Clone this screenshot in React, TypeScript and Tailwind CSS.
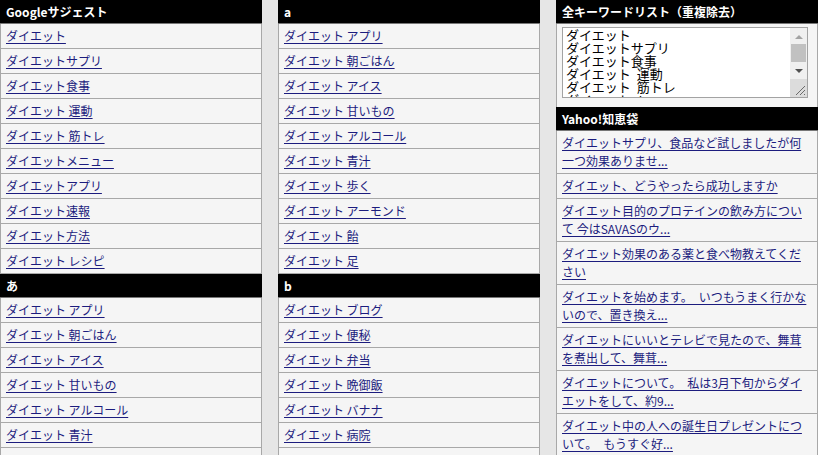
import React from 'react';

type Section = {
    title: string,
    items: string[]
}

// the last row of each lower section is cut off by the window bottom, so it is empty here
const col1: Section[] = [
    {
        title: 'Googleサジェスト',
        items: ['ダイエット', 'ダイエットサプリ', 'ダイエット食事', 'ダイエット 運動', 'ダイエット 筋トレ', 'ダイエットメニュー', 'ダイエットアプリ', 'ダイエット速報', 'ダイエット方法', 'ダイエット レシピ']
    },
    {
        title: 'あ',
        items: ['ダイエット アプリ', 'ダイエット 朝ごはん', 'ダイエット アイス', 'ダイエット 甘いもの', 'ダイエット アルコール', 'ダイエット 青汁', '']
    }
];

const col2: Section[] = [
    {
        title: 'a',
        items: ['ダイエット アプリ', 'ダイエット 朝ごはん', 'ダイエット アイス', 'ダイエット 甘いもの', 'ダイエット アルコール', 'ダイエット 青汁', 'ダイエット 歩く', 'ダイエット アーモンド', 'ダイエット 飴', 'ダイエット 足']
    },
    {
        title: 'b',
        items: ['ダイエット ブログ', 'ダイエット 便秘', 'ダイエット 弁当', 'ダイエット 晩御飯', 'ダイエット バナナ', 'ダイエット 病院', '']
    }
];

const chiebukuro = [
    'ダイエットサプリ、食品など試しましたが何一つ効果ありませ...',
    'ダイエット、どうやったら成功しますか',
    'ダイエット目的のプロテインの飲み方について 今はSAVASのウ...',
    'ダイエット効果のある薬と食べ物教えてください',
    'ダイエットを始めます。\u3000いつもうまく行かないので、置き換え...',
    'ダイエットにいいとテレビで見たので、舞茸を煮出して、舞茸...',
    'ダイエットについて。\u3000私は3月下旬からダイエットをして、約9...',
    'ダイエット中の人への誕生日プレゼントについて。\u3000もうすぐ好...'
];

const keywords = ['ダイエット', 'ダイエットサプリ', 'ダイエット食事', 'ダイエット  運動', 'ダイエット  筋トレ', 'ダイエットメニュー', 'ダイエットアプリ'];

function Header({ title }: { title: string }) {
    return (
        <div className="h-[24px] bg-black text-white font-bold text-[12px] leading-[24px] px-[6px] border-b border-[#777]">
            {title}
        </div>
    );
}

function Row({ text }: { text: string }) {
    return (
        <div className="h-[25px] bg-[#f5f5f5] border-b border-x border-[#a8a8a8] px-[5px] text-[12px] leading-[24px]">
            {text && <a href="#" className="text-[#1c1c7e] underline underline-offset-2">{text}</a>}
        </div>
    );
}

function KeywordBox() {
    return (
        <div className="h-[83px] bg-[#f5f5f5] border-x border-[#a8a8a8] px-[5px] pt-[3px]">
            <div className="relative w-[246px] h-[71px] bg-white border border-[#a3a3a3] overflow-hidden flex">
                <div className="flex-1 px-[3px] pt-0 text-[13px] leading-[13px] text-black">
                    {keywords.map((k, i) => <div key={i} className="whitespace-pre">{k}</div>)}
                </div>
                <div className="w-[17px] h-full bg-[#f0f0f0] flex flex-col items-center">
                    <div className="h-[16px] w-full flex items-center justify-center">
                        <svg width={8} height={5} viewBox="0 0 8 5"><path d="M0 5L4 1L8 5Z" fill="#a3a3a3" /></svg>
                    </div>
                    <div className="w-[15px] h-[18px] bg-[#c1c1c1]" />
                    <div className="h-[16px] w-full flex items-center justify-center mt-[1px]">
                        <svg width={8} height={5} viewBox="0 0 8 5"><path d="M0 0L4 4L8 0Z" fill="#505050" /></svg>
                    </div>
                    <div className="flex-1 w-full bg-[#dcdcdc] relative">
                        <svg className="absolute right-[1px] bottom-[1px]" width={12} height={12} viewBox="0 0 12 12">
                            <path d="M11 2L2 11M11 6L6 11M11 10L10 11" stroke="#6b6b6b" strokeWidth={1} />
                        </svg>
                    </div>
                </div>
            </div>
        </div>
    );
}

function QuestionRow({ text }: { text: string }) {
    return (
        <div className="bg-[#f5f5f5] border-b border-x border-[#a8a8a8] px-[5px] py-[3px] text-[12px] leading-[18px]">
            <a href="#" className="text-[#1c1c7e] underline underline-offset-2">{text}</a>
        </div>
    );
}

function Column({ sections }: { sections: Section[] }) {
    return (
        <div className="w-[262px] shrink-0">
            {sections.map((s, i) => (
                <div key={i}>
                    <Header title={s.title} />
                    {s.items.map((it, j) => <Row key={j} text={it} />)}
                </div>
            ))}
        </div>
    );
}

export default function App() {
    return (
        <div className="w-[818px] h-[455px] overflow-hidden bg-[#e6e6e6] flex gap-[16px] font-['Noto_Sans_CJK_JP',sans-serif]">
            <Column sections={col1} />
            <Column sections={col2} />
            <div className="w-[262px] shrink-0">
                <Header title="全キーワードリスト（重複除去）" />
                <KeywordBox />
                <Header title="Yahoo!知恵袋" />
                {chiebukuro.map((q, i) => <QuestionRow key={i} text={q} />)}
            </div>
        </div>
    );
}
